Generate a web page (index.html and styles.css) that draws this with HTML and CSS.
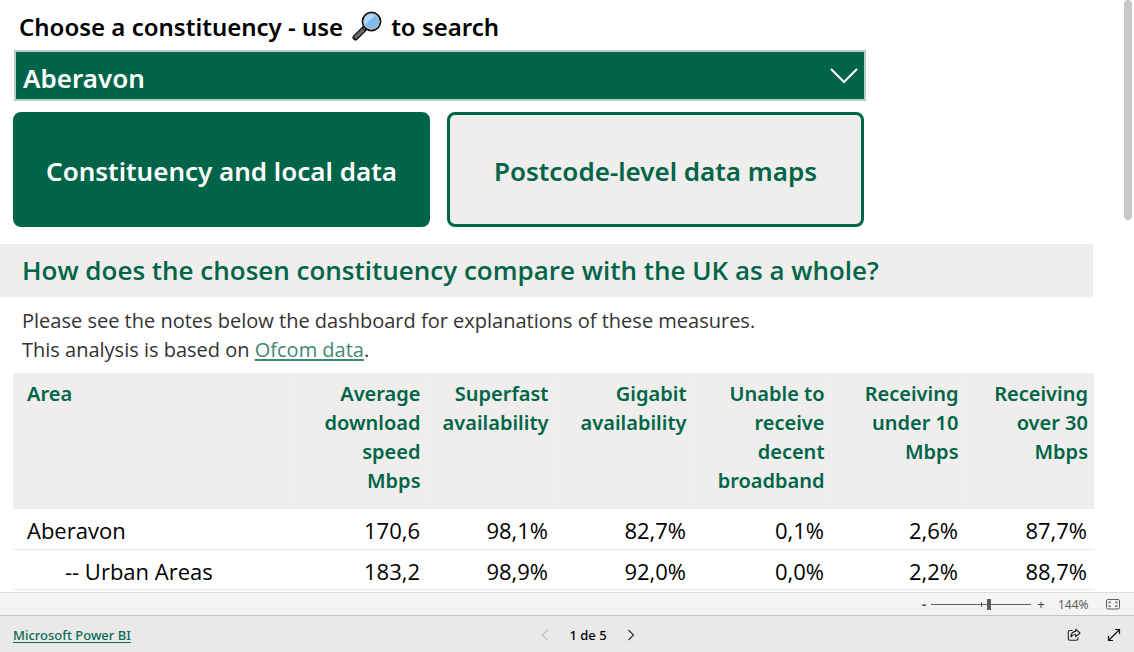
FILE: index.html
```html
<!DOCTYPE html>
<html lang="en">
<head>
<meta charset="utf-8">
<meta name="viewport" content="width=device-width, initial-scale=1">
<title>Constituency broadband data</title>
<link rel="stylesheet" href="styles.css">
</head>
<body>
<div class="app">
  <div class="viewport">
    <main class="report">
      <section class="picker">
        <label class="picker-label" for="constituency">
          <span>Choose a constituency - use</span>
          <svg class="lens" viewBox="0 0 30 30" aria-hidden="true">
            <path d="M3.500 26.500 12.500 17.500" stroke="#111" stroke-width="6" stroke-linecap="round"/>
            <path d="M3.800 26.200 11.500 18.500" stroke="#636b70" stroke-width="3.200" stroke-linecap="round"/>
            <path d="M11.500 18.500 14.500 15.500" stroke="#111" stroke-width="3"/>
            <path d="M12 18 14 16" stroke="#b8bec2" stroke-width="1.600"/>
            <circle cx="19.500" cy="10.500" r="9" fill="#7fbcf0" stroke="#111" stroke-width="1.800"/>
            <circle cx="19.500" cy="10.500" r="7.600" fill="none" stroke="#b6bcc4" stroke-width="1.200"/>
            <path d="M13 13.500A7 7 0 0 1 23 4.500Z" fill="#b3d9f8"/>
          </svg>
          <span>to search</span>
        </label>
        <div class="select-wrap">
          <select class="select" id="constituency"><option>Aberavon</option></select>
          <svg class="select-arrow" viewBox="0 0 28 16" aria-hidden="true"><path d="M1 1 14 14 27 1" fill="none" stroke="#fff" stroke-width="2"/></svg>
        </div>
        <div class="tabs">
          <button class="tab tab-active" type="button">Constituency and local data</button>
          <button class="tab" type="button">Postcode-level data maps</button>
        </div>
      </section>
      <h1 class="heading">How does the chosen constituency compare with the UK as a whole?</h1>
      <p class="notes">Please see the notes below the dashboard for explanations of these measures.<br>This analysis is based on <a class="link" href="#">Ofcom data</a>.</p>
      <table class="table">
        <colgroup><col><col class="c-speed"><col class="c-super"><col class="c-wide"><col class="c-wide"><col class="c-speed"><col class="c-last"></colgroup>
        <thead>
          <tr><th scope="col">Area</th><th scope="col">Average download speed<br>Mbps</th><th scope="col">Superfast availability</th><th scope="col">Gigabit availability</th><th scope="col">Unable to receive decent broadband</th><th scope="col">Receiving under 10 Mbps</th><th scope="col">Receiving over 30 Mbps</th></tr>
        </thead>
        <tbody>
          <tr><td>Aberavon</td><td>170,6</td><td>98,1%</td><td>82,7%</td><td>0,1%</td><td>2,6%</td><td>87,7%</td></tr>
          <tr><td class="nested">-- Urban Areas</td><td>183,2</td><td>98,9%</td><td>92,0%</td><td>0,0%</td><td>2,2%</td><td>88,7%</td></tr>
        </tbody>
      </table>
    </main>
    <div class="scrollbar"><div class="scroll-thumb"></div></div>
  </div>
  <div class="zoombar">
    <button class="zoom-btn zoom-out" type="button" aria-label="Zoom out">-</button>
    <input class="zoom-range" type="range" min="0" max="100" value="58" aria-label="Zoom">
    <button class="zoom-btn" type="button" aria-label="Zoom in">+</button>
    <span class="zoom-value">144%</span>
    <button class="icon-btn fit" type="button" aria-label="Fit to page">
      <svg width="14" height="11" viewBox="0 0 14 11" fill="none" stroke="#605e5c"><rect x=".5" y=".5" width="13" height="9.500" rx="1.500"/><path d="M5 3H3v1.500M9 3h2v1.500M5 7.500H3V6M9 7.500h2V6"/></svg>
    </button>
  </div>
  <footer class="footer">
    <a class="brand" href="#">Microsoft Power BI</a>
    <nav class="pager" aria-label="Pages">
      <button class="icon-btn" type="button" aria-label="Previous page" disabled><svg width="8" height="12" viewBox="0 0 8 12" fill="none" stroke="#c0c0c0" stroke-width="1.200"><path d="M6.500 1 1.500 6l5 5"/></svg></button>
      <span>1 de 5</span>
      <button class="icon-btn" type="button" aria-label="Next page"><svg width="8" height="12" viewBox="0 0 8 12" fill="none" stroke="#333" stroke-width="1.200"><path d="m1.500 1 5 5-5 5"/></svg></button>
    </nav>
    <div class="actions">
      <button class="icon-btn" type="button" aria-label="Share"><svg width="14" height="14" viewBox="0 0 14 14" fill="none" stroke="#222" stroke-width="1.100"><path d="M5.500 2.500H3A1.700 1.700 0 0 0 1.300 4.200v6.300A1.700 1.700 0 0 0 3 12.200h6.300a1.700 1.700 0 0 0 1.700-1.700v-1"/><path d="M8.700 1.200 13 5 8.700 8.700V6.500C6.300 6.400 5 7.300 3.900 8.800 4 5.500 5.700 3.700 8.700 3.400Z" stroke-linejoin="round"/></svg></button>
      <button class="icon-btn" type="button" aria-label="Full screen"><svg width="14" height="14" viewBox="0 0 14 14" fill="none" stroke="#111" stroke-width="1.200"><path d="M1.500 12.500 12.500 1.500M8 1.500h4.500V6M1.500 8v4.500H6"/></svg></button>
    </div>
  </footer>
</div>
</body>
</html>
```
FILE: styles.css
```css
* { box-sizing: border-box; }

body {
  margin: 0;
  font-family: "Noto Sans", "Open Sans", sans-serif;
  color: #000;
  background: #fff;
}

button, select { font-family: inherit; margin: 0; }

.app { display: flex; flex-direction: column; height: 100vh; }

.viewport { display: flex; flex: 1; min-height: 0; overflow: hidden; }

.report { flex: 1; min-width: 0; }

.scrollbar { flex: 0 0 41px; display: flex; justify-content: flex-end; padding-right: 2px; }

.scroll-thumb { width: 8px; height: 220px; border-radius: 4px; background: #c8c8c8; }

.picker { max-width: 866px; padding: 0 0 0 14px; }

.picker-label {
  display: flex;
  align-items: center;
  gap: 9px;
  height: 50px;
  padding: 2px 0 0 5px;
  font-size: 24px;
  font-weight: 600;
}

.lens { width: 30px; height: 30px; fill: none; }

.select-wrap { display: grid; align-items: center; }

.select {
  grid-area: 1 / 1;
  appearance: none;
  width: 100%;
  height: 51px;
  padding: 4px 7px 0;
  border: 2px solid #b3cfc5;
  border-radius: 0;
  background: #006548;
  color: #fff;
  font-size: 26px;
  font-weight: 600;
}

.select-arrow { grid-area: 1 / 1; justify-self: end; width: 28px; height: 16px; margin-right: 8px; pointer-events: none; }

.tabs { display: grid; grid-template-columns: 1fr 1fr; gap: 17px; padding: 11px 2px 17px 0; margin-left: -1px; }

.tab {
  height: 115px;
  padding: 2px 8px 0;
  border: 3px solid #006548;
  border-radius: 8px;
  background: #efeeec;
  color: #006548;
  font-size: 26px;
  font-weight: 600;
  white-space: nowrap;
}

.tab-active { background: #006548; color: #fff; }

.heading {
  margin: 0;
  padding: 8px 22px 9px;
  background: #efeeec;
  color: #006548;
  font-family: "Open Sans", "Noto Sans", sans-serif;
  font-size: 26px;
  line-height: 36px;
  font-weight: 600;
  white-space: nowrap;
}

.notes {
  margin: 0;
  padding: 9px 22px;
  color: #333;
  font-family: "Open Sans", "Noto Sans", sans-serif;
  font-size: 20px;
  line-height: 29px;
}

.link { color: #3f8872; text-underline-offset: 2px; }

.table {
  width: calc(100% - 12px);
  margin-left: 13px;
  border-collapse: collapse;
  table-layout: fixed;
}

.c-speed { width: 134px; }
.c-super { width: 128px; }
.c-wide { width: 138px; }
.c-last { width: 129px; }

.table th {
  height: 136px;
  padding: 6px 6px 14px 0;
  border-right: 1px solid #f3f2f1;
  background: #efeeec;
  color: #006548;
  font-size: 20px;
  line-height: 29px;
  font-weight: 600;
  text-align: right;
  vertical-align: top;
}

.table th:last-child { border-right: 0; }

.table td {
  height: 40px;
  padding: 3px 7px 0 0;
  border-bottom: 1px solid #e9e9e9;
  font-family: "Open Sans", "Noto Sans", sans-serif;
  font-size: 22px;
  line-height: 36px;
  text-align: right;
}

.table th:first-child, .table td:first-child { padding-left: 14px; text-align: left; }

.table td.nested:first-child { padding-left: 52px; }

.zoombar {
  display: flex;
  align-items: center;
  justify-content: flex-end;
  height: 23px;
  padding-right: 14px;
  border-top: 1px solid #dcdcdc;
  background: #f4f4f4;
  color: #605e5c;
  font-size: 12px;
}

.zoom-btn { width: 14px; padding: 0; border: 0; background: none; color: #444; font-size: 13px; line-height: 16px; }

.zoom-out { width: 8px; font-weight: 700; }

.zoom-range {
  appearance: none;
  width: 100px;
  height: 12px;
  margin: 0 3px;
  background:
    linear-gradient(#605e5c, #605e5c) 50px 50% / 1px 5px no-repeat,
    linear-gradient(#605e5c, #605e5c) 0 50% / 100% 1px no-repeat;
}

.zoom-range::-webkit-slider-thumb { appearance: none; width: 4px; height: 11px; background: #605e5c; }

.zoom-value { width: 30px; margin: 0 18px 0 10px; }

.footer {
  display: grid;
  grid-template-columns: 1fr auto 1fr;
  align-items: center;
  height: 37px;
  padding: 2px 13px 0 13px;
  border-top: 1px solid #c4c4c4;
  background: #e9e9e9;
  font-size: 13px;
}

.brand { justify-self: start; color: #0b6a55; font-weight: 500; text-underline-offset: 2px; }

.pager { display: flex; align-items: center; gap: 20px; font-weight: 500; padding-left: 42px; }

.icon-btn { display: flex; padding: 0; border: 0; background: none; }

.actions { display: flex; justify-content: flex-end; gap: 26px; }
```
